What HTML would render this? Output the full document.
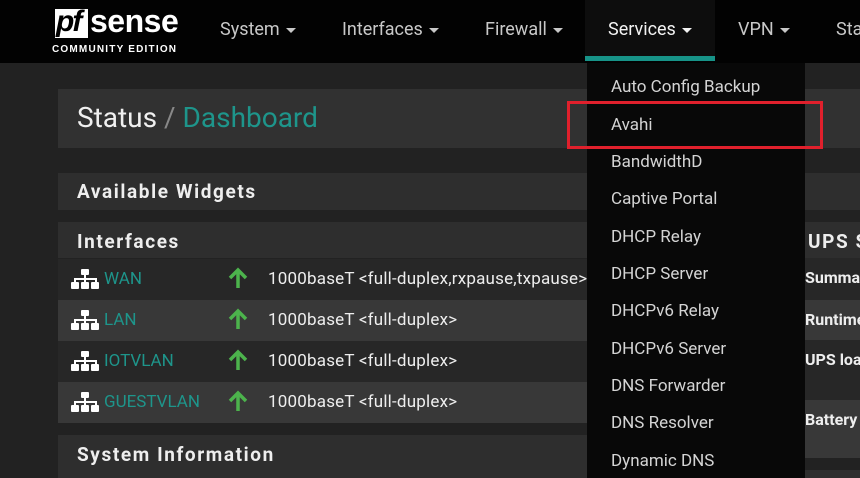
<!DOCTYPE html>
<html><head><meta charset="utf-8"><style>
*{margin:0;padding:0;box-sizing:border-box}
body{width:860px;height:478px;overflow:hidden;background:#222;font-family:"Roboto","Liberation Sans",sans-serif;color:#e6e6e6;position:relative}
.abs{position:absolute}
.nav{left:0;top:0;width:860px;height:63px;background:#020202}
.navi{top:19px;font-size:18px;color:#c8c8c8}
.caret{display:inline-block;border-left:5px solid transparent;border-right:5px solid transparent;border-top:5px solid #c8c8c8;vertical-align:middle;margin-left:6px}
.panel{background:#2e2e2e}
.hdr{font-weight:bold;font-size:19px;letter-spacing:1.6px;color:#eee;white-space:nowrap}
.row{position:absolute;left:58px;width:540px;height:41px}
.ico{position:absolute;left:12px;top:10px}
.name{position:absolute;left:46px;top:10px;font-size:17px;color:#1e958b}
.arr{position:absolute;left:170px;top:7px}
.sp{position:absolute;left:210px;top:10px;font-size:17px;color:#eee;white-space:nowrap;letter-spacing:0.2px}
.dd{left:587px;top:63px;width:218px;height:415px;background:#080808}
.di{position:absolute;left:24px;font-size:17px;color:#d4d4d4;white-space:nowrap}
.ups{position:absolute;left:805px;width:55px;font-size:16px;font-weight:bold;color:#eee;padding-top:10px;white-space:nowrap;overflow:hidden}
</style></head><body>
<div class="abs nav"></div>
<div class="abs" style="left:55px;top:9px;width:33px;height:29px;background:#fff"></div>
<div class="abs" style="left:56px;top:5px;font:italic bold 30px 'Liberation Sans',sans-serif;color:#000;letter-spacing:-2px">pf</div>
<div class="abs" style="left:90px;top:3px;font:bold 32px 'Liberation Sans',sans-serif;color:#fff;letter-spacing:-0.5px">sense</div>
<div class="abs" style="left:52px;top:44px;font:bold 10px 'Liberation Sans',sans-serif;color:#fff;letter-spacing:1.2px">COMMUNITY EDITION</div>
<div class="abs navi" style="left:220px">System<span class="caret"></span></div>
<div class="abs navi" style="left:342px">Interfaces<span class="caret"></span></div>
<div class="abs navi" style="left:485px">Firewall<span class="caret"></span></div>
<div class="abs" style="left:585px;top:0;width:130px;height:56px;background:#0d0d0d"></div>
<div class="abs" style="left:585px;top:56px;width:130px;height:5px;background:#179388"></div>
<div class="abs navi" style="left:608px;color:#f2f2f2">Services<span class="caret" style="border-top-color:#f2f2f2"></span></div>
<div class="abs navi" style="left:738px">VPN<span class="caret"></span></div>
<div class="abs navi" style="left:836px">Status</div>

<div class="abs panel" style="left:58px;top:89px;width:802px;height:59px;background:#313131"></div>
<div class="abs" style="left:77px;top:101px;font-size:28px;color:#f0f0f0">Status <span style="color:#888">/</span> <span style="color:#1e958b">Dashboard</span></div>

<div class="abs panel" style="left:58px;top:173px;width:802px;height:37px"></div>
<div class="abs hdr" style="left:77px;top:180px">Available Widgets</div>

<div class="abs panel" style="left:58px;top:222px;width:540px;height:36px"></div>
<div class="abs hdr" style="left:77px;top:230px">Interfaces</div>
<svg width="0" height="0" style="position:absolute"><defs><g id="net" fill="#fff"><rect x="11" y="0" width="8" height="6" rx="1"/><rect x="14" y="6" width="2" height="4"/><rect x="4" y="9" width="23" height="2"/><rect x="4" y="9" width="2" height="4"/><rect x="14" y="9" width="2" height="4"/><rect x="25" y="9" width="2" height="4"/><rect x="1" y="13" width="8" height="7" rx="1"/><rect x="11" y="13" width="8" height="7" rx="1"/><rect x="21" y="13" width="8" height="7" rx="1"/></g><g id="up" fill="none" stroke="#4cb34c" stroke-width="3.5"><path d="M10 22V4M2 12L10 4L18 12"/></g></defs></svg>
<div class="row" style="top:259px;background:#272727"><svg class="ico" width="30" height="21"><use href="#net"/></svg><span class="name">WAN</span><svg class="arr" width="20" height="24"><use href="#up"/></svg><span class="sp">1000baseT &lt;full-duplex,rxpause,txpause&gt;</span></div>
<div class="row" style="top:300px;background:#383838"><svg class="ico" width="30" height="21"><use href="#net"/></svg><span class="name">LAN</span><svg class="arr" width="20" height="24"><use href="#up"/></svg><span class="sp">1000baseT &lt;full-duplex&gt;</span></div>
<div class="row" style="top:341px;background:#272727"><svg class="ico" width="30" height="21"><use href="#net"/></svg><span class="name">IOTVLAN</span><svg class="arr" width="20" height="24"><use href="#up"/></svg><span class="sp">1000baseT &lt;full-duplex&gt;</span></div>
<div class="row" style="top:382px;background:#383838"><svg class="ico" width="30" height="21"><use href="#net"/></svg><span class="name">GUESTVLAN</span><svg class="arr" width="20" height="24"><use href="#up"/></svg><span class="sp">1000baseT &lt;full-duplex&gt;</span></div>

<div class="abs panel" style="left:58px;top:435px;width:540px;height:43px"></div>
<div class="abs hdr" style="left:77px;top:443px">System Information</div>

<div class="abs panel" style="left:805px;top:222px;width:55px;height:36px;overflow:hidden"><div class="hdr" style="position:absolute;left:3px;top:8px">UPS Status</div></div>
<div class="ups" style="top:258px;height:42px;background:#272727">Summary</div>
<div class="ups" style="top:300px;height:40px;background:#383838">Runtime</div>
<div class="ups" style="top:340px;height:60px;background:#272727">UPS load</div>
<div class="ups" style="top:400px;height:58px;background:#383838">Battery</div>
<div class="abs panel" style="left:805px;top:470px;width:55px;height:8px"></div>

<div class="abs dd">
<div class="di" style="top:14px">Auto Config Backup</div>
<div class="di" style="top:52px">Avahi</div>
<div class="di" style="top:89px">BandwidthD</div>
<div class="di" style="top:126px">Captive Portal</div>
<div class="di" style="top:164px">DHCP Relay</div>
<div class="di" style="top:201px">DHCP Server</div>
<div class="di" style="top:238px">DHCPv6 Relay</div>
<div class="di" style="top:276px">DHCPv6 Server</div>
<div class="di" style="top:313px">DNS Forwarder</div>
<div class="di" style="top:350px">DNS Resolver</div>
<div class="di" style="top:388px">Dynamic DNS</div>
</div>
<div class="abs" style="left:567px;top:101px;width:256px;height:48px;border:3px solid #e0202c"></div>
</body></html>
